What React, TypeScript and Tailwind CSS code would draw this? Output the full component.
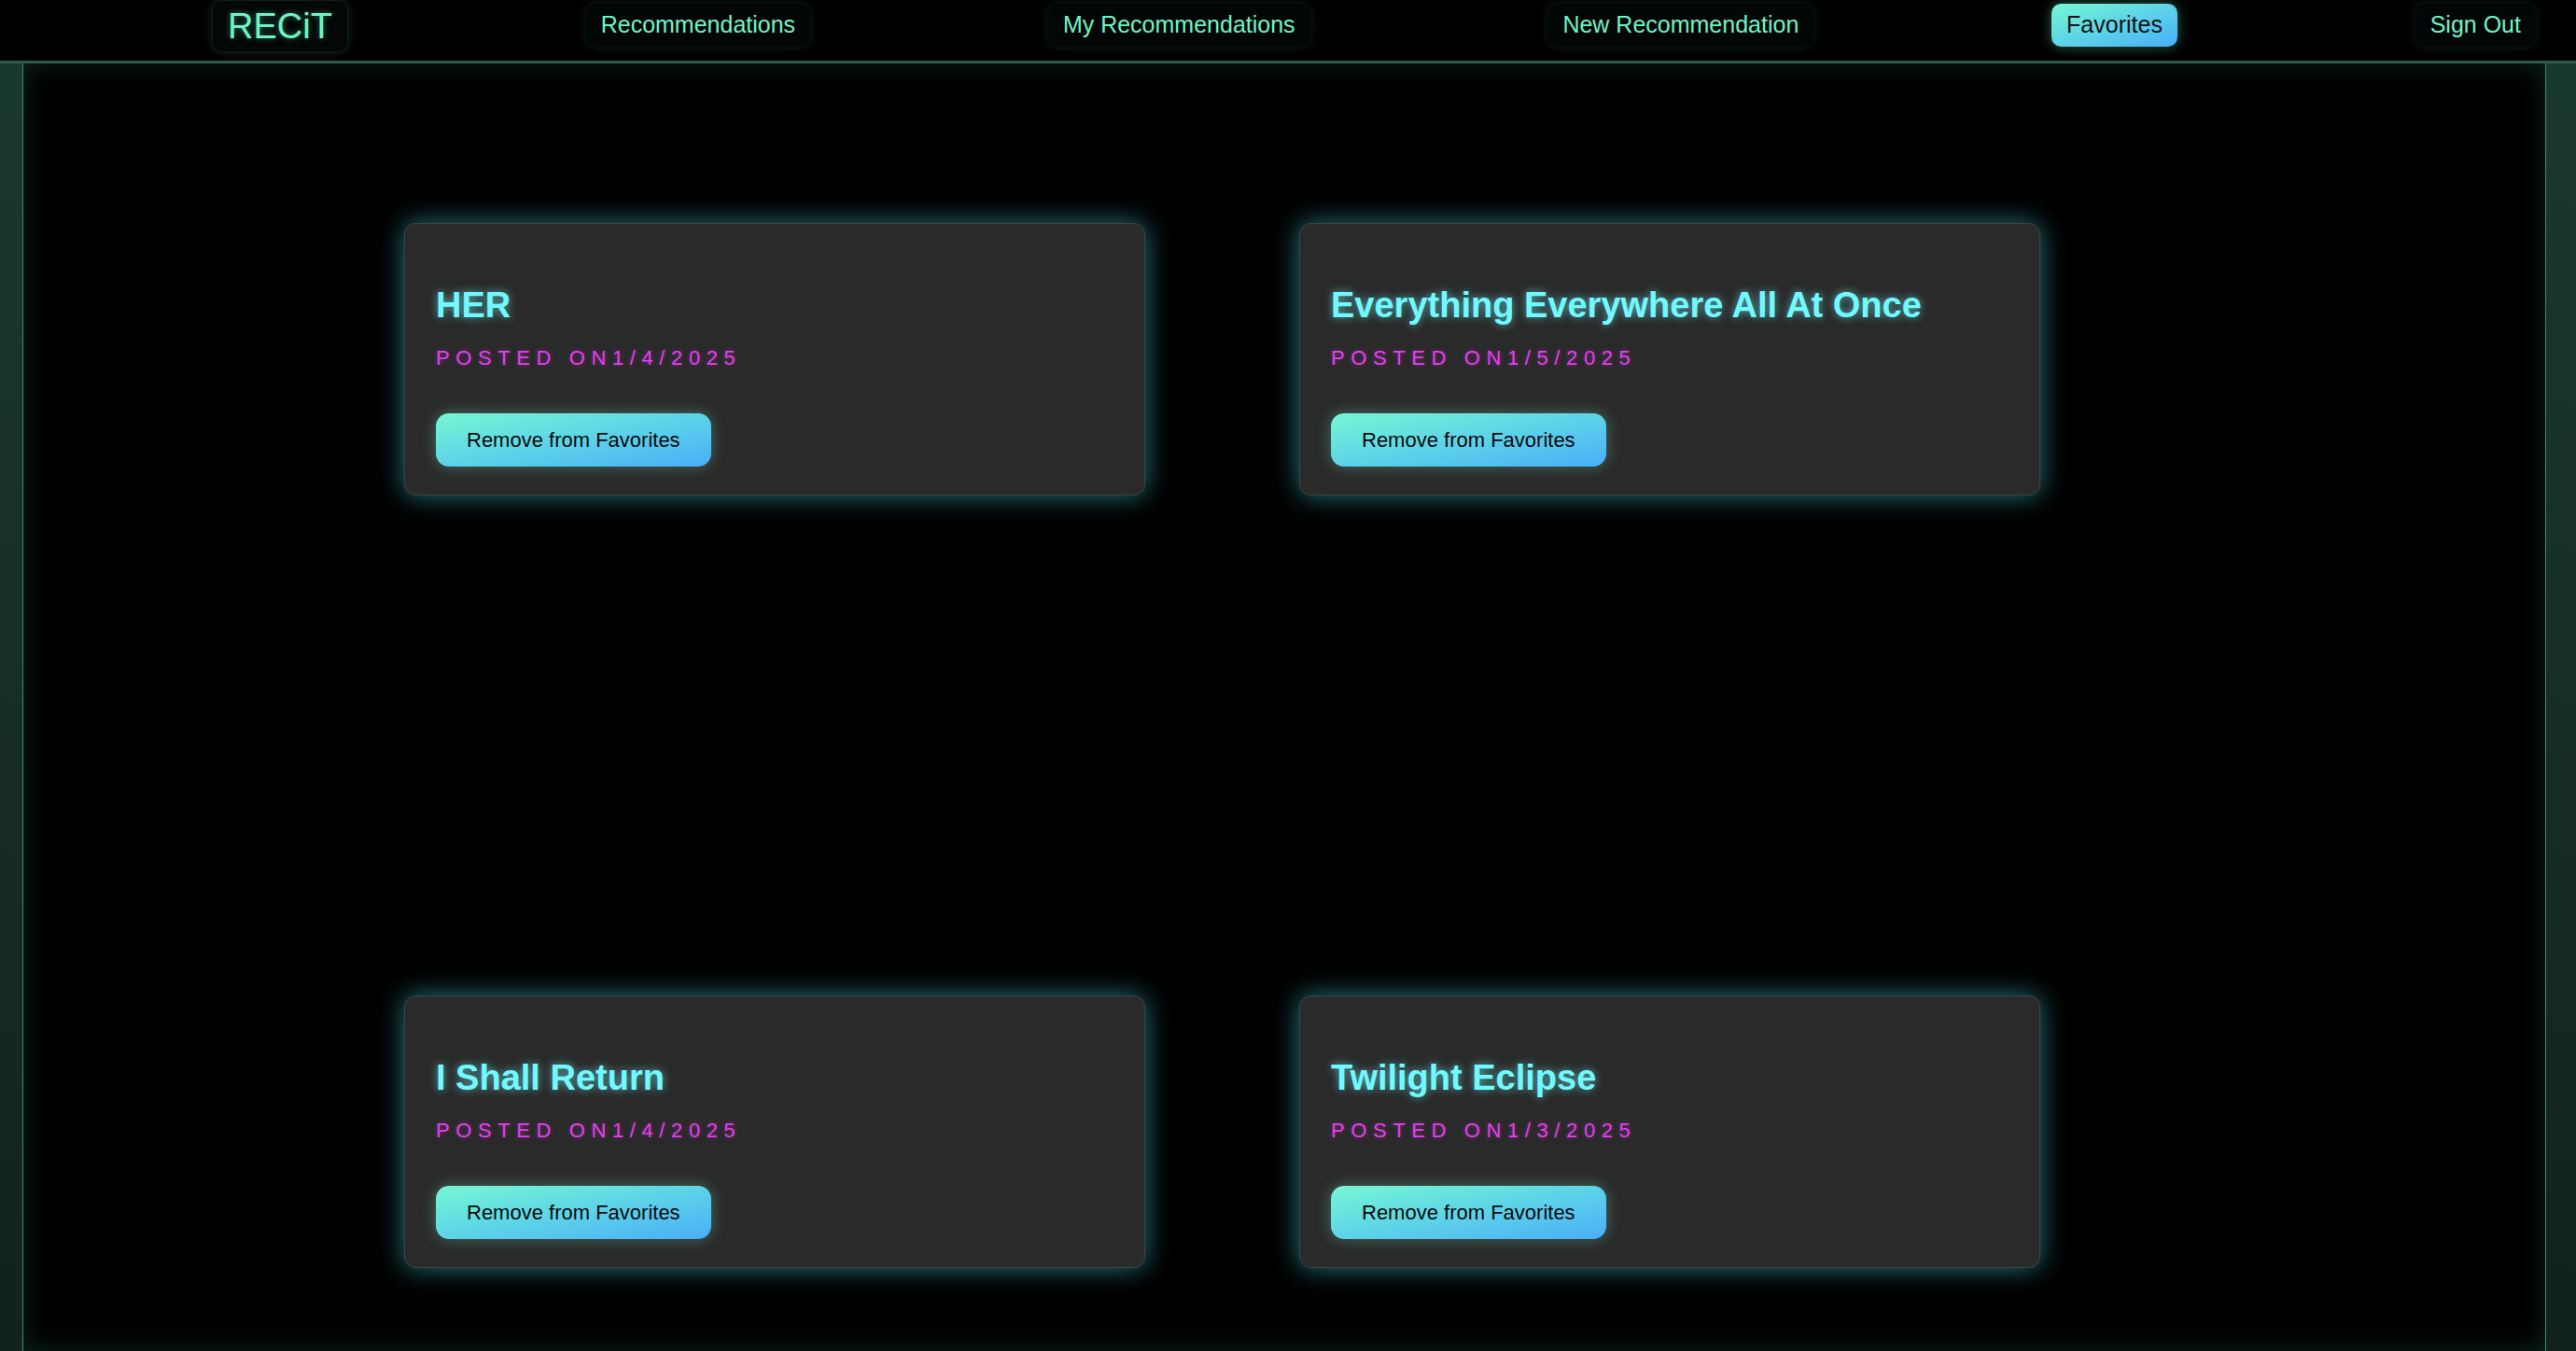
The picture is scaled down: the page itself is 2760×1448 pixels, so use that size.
import React from "react";

const navItems = [
  { label: "Recommendations", active: false },
  { label: "My Recommendations", active: false },
  { label: "New Recommendation", active: false },
  { label: "Favorites", active: true },
  { label: "Sign Out", active: false },
];

const cards = [
  { title: "HER", date: "1/4/2025" },
  { title: "Everything Everywhere All At Once", date: "1/5/2025" },
  { title: "I Shall Return", date: "1/4/2025" },
  { title: "Twilight Eclipse", date: "1/3/2025" },
];

function Card({ title, date }: { title: string; date: string }) {
  return (
    <div className="box-border h-[292px] w-[794px] rounded-[12px] border border-[#3b4444] bg-[#2a2a2a] px-[33px] pt-[65px] pb-[32px] shadow-[0_0_28px_rgba(70,215,225,0.55)]">
      <h2 className="m-0 text-[38px] leading-[44px] font-bold text-[#72f9ff] [text-shadow:0_0_10px_rgba(114,249,255,0.65)]">
        {title}
      </h2>
      <p className="m-0 mt-[22px] text-[22px] leading-[25px] font-normal tracking-[0.3em] text-[#e63ef0] uppercase [text-shadow:0_0_5px_rgba(230,62,240,0.35)]">
        Posted on{date}
      </p>
      <button className="mt-[47px] box-border flex h-[57px] items-center rounded-[14px] bg-gradient-to-br from-[#76f7d2] to-[#4aaef8] px-[33px] text-[22px] text-[#0a0a0a] shadow-[0_0_16px_rgba(120,240,210,0.35)]">
        Remove from Favorites
      </button>
    </div>
  );
}

export default function App() {
  return (
    <div className="min-h-[1448px] w-[2760px] overflow-hidden bg-black font-['Liberation_Sans',Arial,sans-serif]">
      <nav className="box-border h-[68px] border-b-[3px] border-[#2c5b4a] bg-black">
        <div className="flex h-[65px] items-start justify-between pl-[227px] pr-[43px]">
          <div className="box-border flex h-[56px] items-center rounded-[10px] border border-[#0f1d18] bg-[#030706] px-[16px] text-[38px] text-[#6ff3c5] shadow-[0_0_10px_rgba(110,243,197,0.18)] [text-shadow:0_0_6px_rgba(110,243,197,0.45)]">
            RECiT
          </div>
          {navItems.map((item) =>
            item.active ? (
              <div
                key={item.label}
                className="mt-[4px] box-border flex h-[46px] items-center rounded-[10px] bg-gradient-to-br from-[#76f7d2] to-[#4aaef8] px-[16px] text-[25px] text-[#111] shadow-[0_0_14px_rgba(110,243,197,0.4)]"
              >
                {item.label}
              </div>
            ) : (
              <div
                key={item.label}
                className="mt-[4px] box-border flex h-[46px] items-center rounded-[10px] bg-[#030606] px-[16px] text-[25px] text-[#6ff3c5] shadow-[0_0_10px_rgba(110,243,197,0.15)]"
              >
                {item.label}
              </div>
            )
          )}
        </div>
      </nav>
      <div className="flex min-h-[1380px]">
        <div className="w-[24px] shrink-0 bg-gradient-to-b from-[#1a392e] to-[#12221c]" />
        <main className="box-border w-[2704px] shrink-0 border-x border-[#3a8a6a] bg-black pl-[408px] pt-[171px] shadow-[inset_0_0_28px_rgba(60,170,130,0.22)]">
          <div className="grid grid-cols-[794px_794px] gap-x-[165px] gap-y-[536px]">
            {cards.map((c) => (
              <Card key={c.title} title={c.title} date={c.date} />
            ))}
          </div>
        </main>
        <div className="w-[32px] shrink-0 bg-gradient-to-b from-[#1a392e] to-[#12221c]" />
      </div>
    </div>
  );
}
